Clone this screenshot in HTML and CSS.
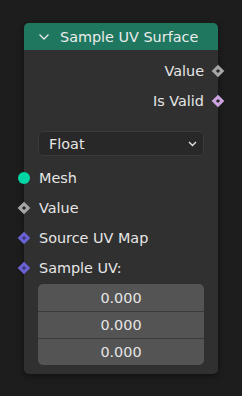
FILE: index.html
```html
<!DOCTYPE html>
<html>
<head>
<meta charset="utf-8">
<link rel="stylesheet" href="styles.css">
</head>
<body>
<div class="node">
  <div class="header">
    <svg class="hchev" width="12" height="8" viewBox="0 0 12 8"><polyline points="1.5,1.5 6,6 10.5,1.5" fill="none" stroke="#e8e8e8" stroke-width="1.3"/></svg>
    <span class="title">Sample UV Surface</span>
  </div>
  <div class="body">
    <div class="row out">
      <span class="label">Value</span>
      <span class="sock diamond gray right"></span>
    </div>
    <div class="row out">
      <span class="label">Is Valid</span>
      <span class="sock diamond pink right"></span>
    </div>
    <div class="dropdown">
      <span>Float</span>
      <svg width="9" height="6" viewBox="0 0 9 6"><polyline points="1,1 4.5,4.5 8,1" fill="none" stroke="#e0e0e0" stroke-width="1.4"/></svg>
    </div>
    <div class="row in first">
      <span class="sock circle green left"></span>
      <span class="label">Mesh</span>
    </div>
    <div class="row in">
      <span class="sock diamond gray left"></span>
      <span class="label">Value</span>
    </div>
    <div class="row in">
      <span class="sock diamond violet left"></span>
      <span class="label">Source UV Map</span>
    </div>
    <div class="row in">
      <span class="sock diamond violet left"></span>
      <span class="label">Sample UV:</span>
    </div>
    <div class="vector">
      <div class="field">0.000</div>
      <div class="field">0.000</div>
      <div class="field">0.000</div>
    </div>
  </div>
</div>
</body>
</html>
```
FILE: styles.css
```css
html, body {
  margin: 0;
  padding: 0;
  background: #1d1d1d;
  width: 242px;
  height: 396px;
  overflow: hidden;
  font-family: "DejaVu Sans", sans-serif;
}
.node {
  margin: 23px 0 0 24px;
  width: 194px;
  height: 351px;
  background: #303030;
  border-radius: 5px;
  box-shadow: 0 2px 6px rgba(0,0,0,0.45);
  position: relative;
  display: flex;
  flex-direction: column;
}
.header {
  height: 27px;
  background: #1e775e;
  border-radius: 5px 5px 0 0;
  display: flex;
  align-items: center;
  color: #ececec;
  font-size: 14.4px;
}
.hchev {
  margin-left: 14px;
  margin-right: 10px;
}
.body {
  display: flex;
  flex-direction: column;
  padding: 6px 14px 8px 14px;
}
.row {
  height: 30px;
  display: flex;
  align-items: center;
  position: relative;
  color: #e6e6e6;
  font-size: 14.4px;
}
.row.out {
  justify-content: flex-end;
}
.row.in {
  padding-left: 1px;
}
.row.in.first {
  margin-top: 7px;
}
.sock {
  position: absolute;
  top: 50%;
}
.sock.right { right: -14px; }
.sock.left { left: -14px; }
.diamond {
  width: 9px;
  height: 9px;
  transform: translate(50%, -50%) rotate(45deg);
  display: flex;
  align-items: center;
  justify-content: center;
}
.sock.left.diamond { transform: translate(-50%, -50%) rotate(45deg); }
.diamond::after {
  content: "";
  width: 2.5px;
  height: 2.5px;
  background: #2a2a2a;
}
.gray { background: #a6a6a6; }
.pink { background: #cba4e0; }
.violet { background: #6a62d0; }
.violet::after { background: #3b3678; }
.circle {
  width: 12px;
  height: 12px;
  border-radius: 50%;
  transform: translate(-50%, -50%);
}
.green { background: #00d6a3; }
.dropdown {
  margin-top: 15px;
  height: 25px;
  box-sizing: border-box;
  background: #282828;
  border: 1px solid #3a3a3a;
  border-radius: 5px;
  display: flex;
  align-items: center;
  justify-content: space-between;
  padding: 0 6px 0 10px;
  color: #e6e6e6;
  font-size: 14.4px;
}
.vector {
  margin-top: 1px;
  display: flex;
  flex-direction: column;
  border-radius: 5px;
  overflow: hidden;
  background: #545454;
}
.field {
  height: 27px;
  display: flex;
  align-items: center;
  justify-content: center;
  color: #e6e6e6;
  font-size: 14.4px;
  border-top: 1px solid #3a3a3a;
  box-sizing: border-box;
}
.field:first-child { border-top: none; }
```
